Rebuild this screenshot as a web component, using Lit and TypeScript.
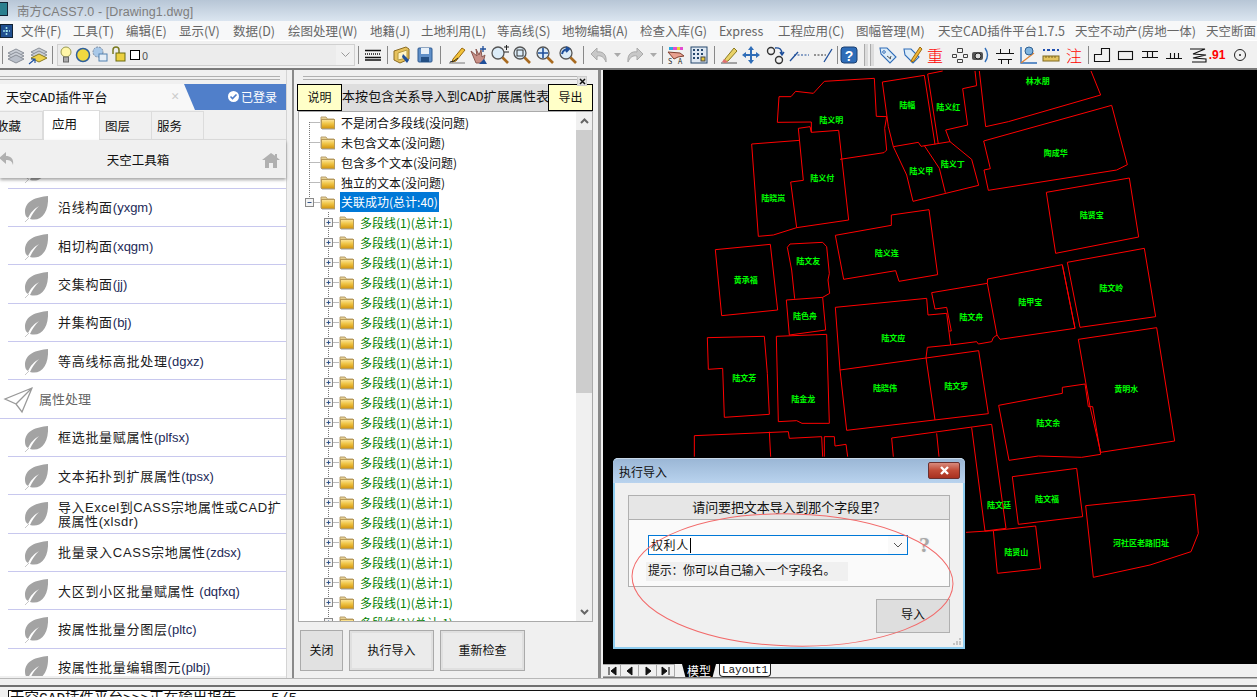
import { LitElement, html, css, svg } from "lit";
import { customElement } from "lit/decorators.js";

const MENUS: [string, number][] = [
  ["文件(F)", 52], ["工具(T)", 53], ["编辑(E)", 53], ["显示(V)", 54], ["数据(D)", 55], ["绘图处理(W)", 82], ["地籍(J)", 51],
  ["土地利用(L)", 76], ["等高线(S)", 65], ["地物编辑(A)", 78], ["检查入库(G)", 79], ["Express", 59], ["工程应用(C)", 78],
  ["图幅管理(M)", 82], ["天空CAD插件平台1.7.5", 137], ["天空不动产(房地一体)", 131], ["天空断面", 60],
];

const ic = (body: unknown) => html`<svg class="ic" width="20" height="20" viewBox="0 0 20 20">${body}</svg>`;
const zoomIc = (inner: unknown) => ic(svg`<circle cx="8" cy="8" r="6" fill="#dcecf8" stroke="#555" stroke-width="1.3"/><path d="M12.5 12.5L18 18" stroke="#a86a20" stroke-width="2.6"/>${inner}`);
const shapeStroke = "#111";

const ICONS: Record<string, unknown> = {
  layer1: ic(svg`<path d="M10 4l8 4-8 4-8-4z" fill="#c9ced6" stroke="#8a8f98"/><path d="M10 7l8 4-8 4-8-4z" fill="#c9ced6" stroke="#8a8f98"/><path d="M10 10l8 4-8 4-8-4z" fill="#b9bfc9" stroke="#8a8f98"/>`),
  layer2: ic(svg`<path d="M11 3l8 4-8 4-8-4z" fill="#c9ced6" stroke="#8a8f98"/><path d="M11 6l8 4-8 4-8-4z" fill="#c9ced6" stroke="#8a8f98"/><path d="M11 9l8 4-8 4-8-4z" fill="#eed24c" stroke="#8a7a20"/><path d="M1 19l6-5M3 14h4v4" stroke="#1c4fa0" stroke-width="1.1" fill="none"/>`),
  line: ic(svg`<path d="M2 5.500h16M2 9h1m1 0h1m1 0h1m1 0h1m1 0h1m1 0h1m1 0h1m1 0h1M2 12.500h16M2 15h16" stroke="#111" stroke-width="1.300"/>`),
  open: ic(svg`<path d="M2 6l12-4 3 2v10l-9 4-6-3z" fill="#e7c25c" stroke="#8a6a20"/><path d="M6 8l9-3v8l-9 2z" fill="#fff4c8" stroke="#b49a40"/><path d="M11 9l6 6-2 3-5-6z" fill="#1f4f9a"/>`),
  save: ic(svg`<rect x="3" y="3" width="14" height="14" rx="1" fill="#5f8fc8" stroke="#2e5a90"/><rect x="6" y="3" width="8" height="6" fill="#e8f0f8"/><rect x="6" y="12" width="8" height="5" fill="#234f84"/>`),
  pencil: ic(svg`<path d="M2 18h16" stroke="#777"/><path d="M6 14L15 3l3 2-9 11-4 1z" fill="#f2c238" stroke="#9a6a10"/><path d="M3 17q4 0 8-4" stroke="#222" fill="none"/>`),
  hand: ic(svg`<path d="M3 6l6 5-1-7 3 6 2-5 1 7 3-2-2 8H8z" fill="#c89088" stroke="#8a5850"/><path d="M15 1v6M12 4h6" stroke="#1f4f9a" stroke-width="1.300"/><path d="M11 19l5-5 3 5z" fill="#1f4f9a"/>`),
  zoomPlus: zoomIc(svg`<path d="M14 2h5M16.500 0v5M14 7h5" stroke="#222" stroke-width="1"/>`),
  zoomBox: zoomIc(svg`<rect x="5" y="5" width="6" height="6" fill="none" stroke="#333"/>`),
  zoomMove: zoomIc(svg`<path d="M8 3v10M3 8h10" stroke="#1f4f9a" stroke-width="1.600"/>`),
  zoomBack: zoomIc(svg`<path d="M4 9q1-5 7-5M8 2l3 2-3 3" stroke="#1f4f9a" stroke-width="2" fill="none"/>`),
  undo: ic(svg`<path d="M17 17C18 9 13 6 8 7V3L2 9l6 6v-4c4-1 7 1 9 6z" fill="#c8c8c8" stroke="#aaa"/>`),
  redo: ic(svg`<path d="M3 17C2 9 7 6 12 7V3l6 6-6 6v-4c-4-1-7 1-9 6z" fill="#c8c8c8" stroke="#aaa"/>`),
  drop: html`<svg width="7" height="4" viewBox="0 0 7 4"><path d="M0 0h7L3.500 4z" fill="#aaa"/></svg>`,
  color: ic(svg`<path d="M3 2h14v3H3z" fill="#e34ad0"/><path d="M3 2h4v3H3z" fill="#2aa8e0"/><path d="M11 2h3v3h-3z" fill="#e8d22c"/><path d="M2 7l12 1 4 3-6 1-4 2z" fill="#e8a090" stroke="#804030"/><text x="2" y="19" font-size="7" fill="#222">S</text><text x="12" y="19" font-size="7" fill="#222">A</text>`),
  grid: ic(svg`<rect x="2" y="2" width="16" height="16" fill="#dfe8f2" stroke="#26486e"/><path d="M4 5h2m2 0h2m2 0h2M4 9h2m2 0h2m2 0h2M4 13h2m2 0h2" stroke="#26486e" stroke-width="2"/><rect x="12" y="12" width="4" height="4" fill="#e8c838" stroke="#444"/>`),
  eraser: ic(svg`<path d="M2 18h16" stroke="#555"/><path d="M6 14L15 3l3 3-9 10-4 1z" fill="#e9d268" stroke="#8a7a20"/><path d="M5 14l4 3-3 1-3-1z" fill="#e07070"/>`),
  move: ic(svg`<path d="M10 1l3 4h-2v4h4V7l4 3-4 3v-2h-4v4h2l-3 4-3-4h2v-4H5v2l-4-3 4-3v2h4V5H7z" fill="#2f6db8"/>`),
  rings: ic(svg`<circle cx="6" cy="6" r="3.500" fill="none" stroke="#333" stroke-width="1.400"/><circle cx="14" cy="15" r="3.500" fill="none" stroke="#333" stroke-width="1.400"/><path d="M10 3q7-1 7 6M15 7l2 3 2-3" stroke="#1f4f9a" stroke-width="1.400" fill="none"/>`),
  trim: ic(svg`<path d="M1 16L9 7" stroke="#1f4f9a" stroke-width="1.300"/><path d="M5 10h15" stroke="#1f4f9a" stroke-dasharray="2 1.500"/>`),
  ext: ic(svg`<path d="M1 10h12" stroke="#333" stroke-dasharray="2 1.500"/><path d="M11 17L19 4" stroke="#1f4f9a" stroke-width="1.300"/>`),
  help: ic(svg`<rect x="2" y="2" width="16" height="16" rx="3" fill="#2f6db8" stroke="#1a3f70"/><text x="10" y="15.500" text-anchor="middle" font-size="14" font-weight="700" font-family="Liberation Sans" fill="#fff">?</text>`),
  tag: ic(svg`<path d="M2 3h7l9 9-6 6-9-9z" fill="#dcecf8" stroke="#2f6db8" stroke-width="1.100"/><circle cx="6" cy="7" r="1.300" fill="#fff" stroke="#2f6db8"/><path d="M9 11l4 3M13 11l-1 3" stroke="#555"/>`),
  tag2: ic(svg`<path d="M1 4h7l8 8-6 6-8-8z" fill="#dcecf8" stroke="#2f6db8" stroke-width="1.100"/><path d="M9 14L17 2l2 2-8 12-3 1z" fill="#f2b838" stroke="#9a6a10"/>`),
  squares: ic(svg`<path d="M7.500 3.500h5v4h-5zM2.500 9.500h4v3h-4zM13.500 9.500h4v3h-4zM7.500 14.500h5v3h-5z" fill="none" stroke="#444" stroke-width="1"/>`),
  camera: ic(svg`<rect x="2" y="7" width="11" height="8" rx="2" fill="#555"/><circle cx="8" cy="11" r="3" fill="#ddd" stroke="#222"/><path d="M15 3q5 7 0 14" stroke="#2f6db8" stroke-width="1.400" fill="none"/>`),
  symbol: ic(svg`<path d="M1 8.500h18M5.500 4v5M14.500 4v5M3 14.500h14M6.500 14v5M13.500 14v5" stroke="#111" stroke-width="1"/>`),
  measure: ic(svg`<path d="M3 2v16h16" stroke="#2f6db8" stroke-width="1.400" fill="none"/><path d="M3 18L16 8" stroke="#e08030" stroke-width="1.200"/><circle cx="11" cy="6" r="4" fill="#7fb4e0" stroke="#2f5f90"/>`),
  ruler: ic(svg`<path d="M2 5h2m2 0h3m2 0h3m2 0h2" stroke="#2050b0" stroke-width="2"/><rect x="2" y="11" width="16" height="5" fill="#e4c460" stroke="#806a20"/><path d="M5 11v2M8 11v2M11 11v2M14 11v2" stroke="#806a20"/>`),
  step: ic(svg`<path d="M2.500 16.500v-7h7v-6h8v13z" fill="none" stroke="${shapeStroke}" stroke-width="1.100"/>`),
  rect: ic(svg`<rect x="2.500" y="6.500" width="14" height="8" fill="none" stroke="${shapeStroke}" stroke-width="1.100"/>`),
  hh: ic(svg`<path d="M2 6.500h16M2 12.500h16M7.500 6.500v6M12.500 6.500v6" stroke="${shapeStroke}" stroke-width="1.100" fill="none"/>`),
  tt: ic(svg`<path d="M2 13.500h16M6.500 8v5M10.500 8v5M14.500 8v5" stroke="${shapeStroke}" stroke-width="1.100" fill="none"/>`),
  zig: ic(svg`<path d="M2 4h15l-12 5 13 1-13 3 13 1v3H4" stroke="${shapeStroke}" stroke-width="1.100" fill="none"/>`),
  target: ic(svg`<circle cx="10" cy="10" r="5.500" fill="none" stroke="#222" stroke-width="1"/><circle cx="10" cy="10" r="1" fill="#222"/>`),
};

type Tool = { w: number; k?: string; t?: string; c?: string };
const TOOLS: Tool[] = [
  { w: 5, c: "sep" }, { w: 21, k: "layer1" }, { w: 24, k: "layer2" }, { w: 4, c: "sep" }, { w: 3 }, { w: 298, c: "combo" },
  { w: 6, c: "sep" }, { w: 24, k: "line" }, { w: 4, c: "sep" }, { w: 26, k: "open" }, { w: 20, k: "save" }, { w: 10, c: "sep" },
  { w: 24, k: "pencil" }, { w: 18, k: "hand" }, { w: 26, k: "zoomPlus" }, { w: 18, k: "zoomBox" }, { w: 28, k: "zoomMove" }, { w: 18, k: "zoomBack" },
  { w: 12, c: "sep" }, { w: 20, k: "undo" }, { w: 16, k: "drop" }, { w: 20, k: "redo" }, { w: 16, k: "drop" }, { w: 2, c: "sep" },
  { w: 26, k: "color" }, { w: 20, k: "grid" }, { w: 10, c: "sep" }, { w: 20, k: "eraser" }, { w: 24, k: "move" }, { w: 24, k: "rings" },
  { w: 24, k: "trim" }, { w: 24, k: "ext" }, { w: 4, c: "sep" }, { w: 20, k: "help" }, { w: 19, c: "grip" }, { w: 20, k: "tag" }, { w: 30, k: "tag2" },
  { w: 14, t: "重", c: "red" }, { w: 8 }, { w: 20, k: "squares" }, { w: 20, k: "camera" }, { w: 30, k: "symbol" }, { w: 16, k: "measure" },
  { w: 30, k: "ruler" }, { w: 16, t: "注", c: "red" }, { w: 12, c: "sep" }, { w: 16, k: "step" }, { w: 32, k: "rect" }, { w: 16, k: "hh" },
  { w: 32, k: "tt" }, { w: 16, k: "zig" }, { w: 22, t: ".91", c: "red small" }, { w: 24, k: "target" },
];

const ROWS: { cn?: string; en?: string; raw?: string; group?: boolean }[] = [
  { cn: "", en: "" },
  { cn: "沿线构面", en: "(yxgm)" }, { cn: "相切构面", en: "(xqgm)" }, { cn: "交集构面", en: "(jj)" }, { cn: "并集构面", en: "(bj)" },
  { cn: "等高线标高批处理", en: "(dgxz)" }, { cn: "属性处理", group: true },
  { cn: "框选批量赋属性", en: "(plfsx)" }, { cn: "文本拓扑到扩展属性", en: "(tpsx)" },
  { raw: "导入Excel到CASS宗地属性或CAD扩展属性(xlsdr)" }, { cn: "批量录入CASS宗地属性", en: "(zdsx)" },
  { cn: "大区到小区批量赋属性 ", en: "(dqfxq)" }, { cn: "按属性批量分图层", en: "(pltc)" }, { cn: "按属性批量编辑图元", en: "(plbj)" },
];

const Z8 = 70, Z9 = 260;
const LINES: [number, number[]][] = [
  [Z8, [262,157,267,80,303,80,317,64,370,70,403,34,553,25,559,139,590,140,584,175,590,240,582,248,450,268]],
  [Z8, [262,157,364,156,364,187,446,181,476,450,320,473]],
  [Z8, [329,211,185,222,205,499,250,495,320,473,302,336,340,331,325,175,360,170,364,187]],
  [Z8, [577,36,703,16,735,223]],
  [Z8, [577,36,595,170,610,230,685,217,693,229,780,215,845,268,866,346,669,394,650,315,610,230]],
  [Z8, [703,227,748,295,766,368]],
  [Z8, [713,12,758,3]], [Z8, [713,12,745,222]],
  [Z8, [855,3,860,47,818,56,833,165,767,180,780,215]],
  [Z8, [868,3,887,170,955,155,1232,75,1203,3]],
  [Z8, [881,213,1265,106,1312,284,1280,300,895,361,882,300,901,296,881,213]],
  [Z8, [1069,367,1318,324,1346,501,1097,550,1069,367]],
  [Z8, [436,496,604,466,604,435,717,419,743,614,627,634,617,602,461,628,436,496]],
  [Z8, [76,539,241,523,263,720,95,737,76,539]],
  [Z8, [314,686,305,600,292,532,300,522,398,517,410,530,418,610,414,630,419,670,398,682]],
  [Z9, [289,120,398,112,407,210,298,225,289,120]],
  [Z9, [52,233,223,229,232,340,238,463,103,472,98,325,55,328,52,233]],
  [Z9, [259,229,410,223,418,490,336,490,320,482,265,485,259,229]],
  [Z9, [436,142,710,115,714,165,770,160,782,255]],
  [Z9, [436,142,450,330,470,511,895,461,866,272,450,330]],
  [Z9, [708,293,735,480]],
  [Z9, [782,255,712,262,708,293]],
  [Z9, [725,98,892,70,921,225,930,238,1155,205,1117,14,893,57,892,70]],
  [Z9, [725,98,735,147,770,142,784,213,778,213]],
  [Z9, [782,255,860,245,865,252,905,245,910,233,921,225]],
  [Z8, [1132,577,1363,535,1397,740,1170,772,1132,577]],
  [Z8, [1117,585,1155,775]],
  [Z9, [1165,238,1400,203,1454,543,1232,577,1200,440,1188,372,1165,238]],
  [Z9, [926,436,1117,400,1117,382,1185,372]],
  [Z9, [926,436,957,601,1045,588,1175,592,1232,583,1208,440,1195,440,1185,372]],
  [Z9, [13,590,13,527,295,515,298,535,395,530,398,590]],
  [Z9, [238,515,242,590]],
  [Z9, [403,590,403,530,433,530,435,558,468,553,473,590]],
  [Z9, [610,590,605,534,905,493,948,805,885,813,845,503]],
  [Z9, [740,520,747,590]],
  [Z9, [828,817,910,812,1037,798,1052,926,922,940,910,812]],
  [Z9, [967,650,1160,625,1178,770,985,793,967,650]],
  [Z9, [1187,737,1514,703,1525,820,1503,875,1380,915,1210,952,1187,737]],
];

const LABELS: [number, string, number, number][] = [
  [Z8,"陆义明",424,151],[Z8,"陆幅",652,106],[Z8,"陆义红",775,112],[Z8,"林水朋",1043,35],[Z8,"陆义付",397,325],[Z8,"陆义甲",694,306],
  [Z8,"陆义丁",788,284],[Z8,"陶成华",1097,250],[Z8,"陆晓岚",250,385],[Z8,"陆贤宝",1205,436],[Z8,"陆义连",590,550],[Z8,"黄承福",167,632],
  [Z8,"陆文友",355,575],[Z8,"陆色舟",345,739],[Z8,"陆文舟",844,742],[Z8,"陆甲宝",1021,699],[Z8,"陆文岭",1264,656],
  [Z9,"陆文应",610,235],[Z9,"陆文芳",163,355],[Z9,"陆金龙",340,418],[Z9,"陆晓伟",585,385],[Z9,"陆文罗",799,380],[Z9,"黄明水",1309,388],
  [Z9,"陆文余",1075,490],[Z9,"陆文福",1071,718],[Z9,"陆文廷",927,738],[Z9,"陆贤山",979,877],[Z9,"河社区老路旧址",1353,852],
];

const toPts = (oy: number, a: number[]) => {
  const out: string[] = [];
  for (let i = 0; i < a.length; i += 2) out.push(`${a[i] / 3 + 690},${a[i + 1] / 3 + oy}`);
  return out.join(" ");
};

const leaf = html`<svg class="leaf" width="27" height="28" viewBox="0 0 27 28"><path d="M25 1C13 2 2 6 2 17c0 3 1 5 3 6 3-6 6-9 11-12-4 4-7 8-9 13 11 3 19-6 18-23z" fill="#a3a3a3"/><path d="M2 27l4-4" stroke="#c8c8c8"/></svg>`;
const plane = html`<svg class="plane" width="30" height="28" viewBox="0 0 30 28"><path d="M29 2L2 13l11 5 6 8zM29 2L13 18" fill="none" stroke="#999" stroke-width="1.300"/></svg>`;
const folder = html`<svg class="folder" width="16" height="15" viewBox="0 0 16 15"><defs><linearGradient id="fg" x1="0" y1="0" x2="0" y2="1"><stop offset="0" stop-color="#fbe6a0"/><stop offset=".45" stop-color="#f0c648"/><stop offset="1" stop-color="#d2940e"/></linearGradient></defs><path d="M1 2h5l1.500 2H14v9H1z" fill="#e6cf90" stroke="#b8a070"/><rect x="1.500" y="4.500" width="13" height="9" fill="url(#fg)" stroke="#b69a5a"/><path d="M2 14.500h13" stroke="#ccc"/></svg>`;
const rootConn = (first: boolean, open: boolean) => html`<svg class="conn" width="21" height="20" viewBox="0 0 21 20"><path d="M10.500 ${first ? 10 : 0}V${open ? 6 : 20}M10.500 10.500H21" stroke="#777" stroke-dasharray="1 1" fill="none"/>${open ? svg`<rect x="6.500" y="6.500" width="8" height="8" fill="#f4f4f4" stroke="#8a8a8a"/><path d="M8.500 10.500h4" stroke="#33558a"/>` : ""}</svg>`;
const kidConn = html`<svg class="conn" width="40" height="20" viewBox="0 0 40 20"><path d="M29.500 0V20M29.500 10.500H40" stroke="#777" stroke-dasharray="1 1" fill="none"/><rect x="25.500" y="6.500" width="8" height="8" fill="#f4f4f4" stroke="#8a8a8a"/><path d="M27.500 10.500h4M29.500 8.500v4" stroke="#33558a"/></svg>`;
const ROOTS = ["不是闭合多段线(没问题)", "未包含文本(没问题)", "包含多个文本(没问题)", "独立的文本(没问题)"];

@customElement("app-root")
export class AppRoot extends LitElement {
  static styles = css`
    :host { display: block; width: 1257px; height: 697px; overflow: hidden; font-family: "Noto Sans CJK SC", "Liberation Sans", sans-serif; font-size: 12px; color: #111; background: #f0f0f0; }
    * { box-sizing: border-box; }
    .app { width: 1257px; height: 697px; display: flex; flex-direction: column; overflow: hidden; }
    .title { height: 21px; flex: none; display: flex; align-items: center; padding-left: 17px; color: #7e7e7e; font: 12.500px "Liberation Sans", "Noto Sans CJK SC", sans-serif; background: linear-gradient(#b7c6d6, #dbe5f0); position: relative; letter-spacing: .1px; }
    .logo { position: absolute; left: -4px; top: 2px; width: 12px; height: 14px; background: #2a7f8f; border: 1px solid #123; }
    .menu { height: 19px; flex: none; display: grid; grid-template-columns: 21px repeat(17, auto) 1fr; justify-content: start; align-items: center; background: #f7f8f9; color: #666; white-space: nowrap; font-size: 12.500px; overflow: hidden; }
    .menu svg { display: block; }
    .toolbar { height: 28px; flex: none; display: flex; align-items: center; background: #f1f1f1; border-top: 1px solid #fff; overflow: hidden; }
    .tool { flex: none; height: 26px; display: flex; align-items: center; justify-content: center; overflow: visible; }
    .tool .ic { flex: none; }
    .sep::after { content: ""; display: block; width: 1px; height: 18px; background: #888; }
    .grip { gap: 2px; }
    .grip::before, .grip::after { content: ""; width: 3px; height: 22px; background: #dcdcdc; border-left: 1px solid #aaa; }
    .red { color: #f00; font-size: 16px; font-family: "Noto Sans CJK SC", sans-serif; font-weight: 300; white-space: nowrap; }
    .small { font: bold 12px "Liberation Sans", sans-serif; }
    .combo { height: 22px; border: 1px solid #d0d0d0; background: #ececec; justify-content: flex-start; gap: 1px; padding-left: 2px; position: relative; }
    .combo .bulb { margin-left: -2px; }
    .combo .ln { margin-left: 1px; color: #555; font-size: 11px; }
    .swatch { width: 10px; height: 10px; border: 1px solid #000; background: #fff; margin-left: 2px; }
    .combo .chev { margin-left: auto; width: 18px; height: 20px; background: #f1f1f1; display: flex; align-items: center; justify-content: center; }
    .rule { height: 2px; flex: none; background: #7a7a7a; }
    .main { height: 608px; flex: none; display: flex; }
    .left { width: 287px; flex: none; display: flex; flex-direction: column; border-right: 1px solid #d4d4d4; }
    .divider { flex: none; width: 11px; padding-left: 5px; }
    .divider i { display: block; width: 2px; height: 100%; background: #8a8a8a; }
    .divider.b { width: 10px; padding-left: 5px; }
    .divider.b i { width: 3px; }
    .griprow { height: 14px; flex: none; padding-top: 6px; }
    .griprow div { height: 4px; margin-right: 6px; border-top: 1px solid #b0b0b0; border-bottom: 1px solid #b0b0b0; }
    .tabhead { height: 26px; flex: none; display: flex; background: #507fca; position: relative; color: #fff; }
    .tabhead .cur { width: 195px; flex: none; background: #f8f8f8; color: #111; padding: 0 0 2px 6px; display: flex; align-items: center; justify-content: space-between; clip-path: polygon(0 0, 184px 0, 195px 100%, 0 100%); font-size: 13px; font-family: "Liberation Mono", "Noto Sans CJK SC", monospace; }
    .tabhead .x { color: #ccc; margin-right: 16px; font-size: 13px; font-weight: 700; }
    .login { margin-left: auto; padding: 0 9px 2px 0; display: flex; align-items: center; gap: 2px; font-size: 12px; }
    .tabs { height: 30px; flex: none; display: flex; background: #f0f0f0; border-bottom: 1px solid #ddd; padding-top: 1px; }
    .tabs div { width: 52px; border: 1px solid #dcdcdc; border-bottom: none; border-left: none; display: flex; align-items: center; padding-left: 5px; font-size: 12.500px; }
    .tabs .clip { width: 43px; justify-content: flex-end; padding: 0 21px 0 0; white-space: nowrap; }
    .tabs .on { width: 57px; background: #fff; border-left: 1px solid #dcdcdc; height: 30px; margin-top: -1px; padding: 0 0 5px 8px; }
    .box { height: 38px; flex: none; display: flex; align-items: center; justify-content: center; background: #f0f0f0; position: relative; font-size: 12.500px; box-shadow: 0 2px 3px rgba(0,0,0,.35); z-index: 1; padding-right: 10px; }
    .box svg { position: absolute; }
    .box .back { left: -2px; top: 11px; }
    .box .home { right: 6px; top: 12px; }
    .list { height: 498px; flex: none; overflow: hidden; background: #fff; }
    .rows { margin-top: -27.700px; }
    .row { height: 38.330px; display: flex; align-items: center; gap: 8px; margin-left: 8px; padding: 2px 0 0 15px; border-bottom: 1.500px solid #c8c8ee; font: 13px/14px "Liberation Sans", "Noto Sans CJK SC", sans-serif; color: #1c1c1c; }
    .row .leaf { flex: none; margin-top: 1px; }
    .row .cn { letter-spacing: .7px; }
    .row .en { color: #1c2a58; }
    .row.group { margin-left: 0; padding-left: 3px; color: #666; gap: 6px; }
    .row .wrap { width: 226px; letter-spacing: .55px; }
    .mid { width: 295px; flex: none; display: flex; flex-direction: column; }
    .mid .griprow { padding-left: 5px; padding-right: 11px; position: relative; }
    .mid .griprow div { margin: 0; }
    .closebox { position: absolute; right: 6px; top: 6px; width: 10px; height: 10px; background: #e0e0e0; border: 1px solid #ccc; display: flex; align-items: center; justify-content: center; }
    .hdr { height: 28px; flex: none; display: flex; background: #dedede; border-bottom: 1px solid #aaa; align-items: stretch; }
    .note { width: 45px; flex: none; background: #ffffc8; border: 1px solid #000; display: flex; align-items: center; justify-content: center; font-size: 12px; margin-left: -1px; padding-bottom: 2px; }
    .note.r { margin-left: 0; width: 45px; }
    .hdr .tt { flex: 1; white-space: nowrap; overflow: hidden; font: 13px/27px "Liberation Mono", "Noto Sans CJK SC", monospace; letter-spacing: .1px; }
    .tree { height: 510px; flex: none; display: flex; background: #fff; border: 1px solid #aaa; border-top: none; }
    .treebody { flex: 1; overflow: hidden; }
    .tr { height: 20px; display: flex; align-items: center; white-space: nowrap; }
    .conn, .folder { flex: none; }
    .tr .lbl { margin-left: 5px; }
    .tr.sel .lbl { background: #0078d7; color: #fff; margin-left: 4px; padding: 0 1px; height: 20px; line-height: 19px; }
    .tr.kid .lbl { color: #008000; margin-left: 5px; }
    .scroll { width: 16px; flex: none; display: flex; flex-direction: column; background: #f0f0f0; }
    .scroll .ar { height: 18px; display: flex; align-items: center; justify-content: center; }
    .scroll .thumb { height: 263px; background: #cdcdcd; }
    .scroll .track { flex: 1; }
    .btns { height: 56px; flex: none; display: flex; padding: 8px 0 7px 2px; gap: 6px; }
    .btn { border: 1px solid #aaa; background: #ebebeb; display: flex; align-items: center; justify-content: center; box-shadow: inset 0 0 0 2px #e0e0e0; font-size: 12px; padding-bottom: 2px; }
    .btn.a { width: 43px; background: #e1e1e1; box-shadow: none; }
    .btn.b { width: 85px; }
    .cadwrap { flex: 1; display: flex; flex-direction: column; }
    .canvas { height: 594px; flex: none; background: #000; position: relative; overflow: hidden; }
    .canvas svg.cad, .canvas svg.ring { position: absolute; left: 0; top: 0; }
    .canvas svg.ring { z-index: 3; pointer-events: none; }
    .cad text { font: bold 8px "Noto Sans CJK SC", sans-serif; fill: #00ff00; text-anchor: middle; dominant-baseline: middle; }
    .layouts { height: 14px; flex: none; display: flex; align-items: stretch; background: #f0f0f0; border-bottom: 1px solid #777; }
    .nav { width: 18px; border: 1px solid #aaa; border-left: none; display: flex; align-items: center; justify-content: center; }
    .ltab { margin-left: 7px; width: 34px; background: #000; color: #fff; font-size: 12px; line-height: 13px; text-align: center; clip-path: polygon(0 0, 100% 0, 90% 100%, 10% 100%); }
    .ltab.l { margin-left: 3px; width: 52px; background: #fff; color: #111; font: 11px/13px "Liberation Mono", monospace; clip-path: none; border: 1px solid #222; border-top: none; border-radius: 0 0 4px 4px; }
    .dialog { position: absolute; left: 10px; top: 388px; width: 352px; height: 191px; z-index: 2; display: flex; flex-direction: column; background: #f0f0f0; border: 2px solid #8fcdf0; border-top: none; border-radius: 5px 5px 0 0; }
    .dlgtitle { height: 25px; flex: none; margin: 0 -2px; padding: 0 5px 0 6px; display: flex; align-items: center; justify-content: space-between; background: linear-gradient(#9bb7d6, #b9d3ee); border-radius: 5px 5px 0 0; border-top: 1px solid #c8d8e8; font-size: 12px; }
    .dlgclose { width: 32px; height: 17px; margin-top: -1px; border: 1px solid #6a3030; border-radius: 2px; background: linear-gradient(#d88a7c, #c04a36 50%, #a83020); display: flex; align-items: center; justify-content: center; }
    .dlgbody { flex: 1; padding: 12px 13px; display: flex; flex-direction: column; position: relative; }
    .frame { height: 92px; flex: none; border: 1px solid #b0b0b0; background: #fafafa; display: flex; flex-direction: column; }
    .frame .q { height: 24px; flex: none; background: #e6e6e6; border-bottom: 1px solid #b0b0b0; display: flex; align-items: center; justify-content: center; font-size: 13px; letter-spacing: -.1px; padding-bottom: 2px; }
    .fields { display: flex; padding: 15px 0 0 19px; gap: 11px; align-items: center; }
    .input { width: 260px; height: 20px; border: 1px solid #0078d7; background: #fff; display: flex; align-items: center; padding-left: 2px; font-size: 12px; }
    .input .val { border-right: 1px solid #000; height: 15px; line-height: 14px; padding-right: 1px; letter-spacing: .6px; }
    .input .ch { margin-left: auto; width: 19px; height: 18px; background: #fafafa; display: flex; align-items: center; justify-content: center; }
    .qmark { color: #a8a8a8; font: bold 22px "Liberation Serif", serif; text-shadow: 0 0 2px #ddd; line-height: 20px; }
    .hint { margin: 7px 0 0 17px; width: 202px; height: 19px; background: #f0f0f0; padding-left: 2px; line-height: 15px; font-size: 12px; letter-spacing: -.3px; }
    .hbtn { align-self: flex-end; margin-top: 12px; width: 74px; height: 34px; background: #dedede; border: 1px solid #b0b0b0; display: flex; align-items: center; justify-content: center; font-size: 12px; padding-bottom: 5px; }
    .resz { position: absolute; right: 2px; bottom: 2px; }
    .bottom { flex: 1; min-height: 0; overflow: hidden; }
    .b1 { height: 7px; background: #f0f0f0; border-top: 1px solid #b8b8b8; }
    .b2 { height: 2px; background: #707070; }
    .b3 { height: 3px; background: #f0f0f0; }
    .b4 { height: 20px; margin-left: 8px; background: #fff; border: 1px solid #111; padding-left: 1px; font: 14.500px/16px "Liberation Mono", "Noto Sans CJK SC", monospace; white-space: pre; overflow: hidden; }
  `;

  renderTool(t: Tool) {
    const cls = `tool ${t.c ?? ""}`;
    if (t.c === "combo")
      return html`<div class=${cls} style="width:${t.w}px">
        <svg class="bulb" width="16" height="20" viewBox="0 0 16 20"><circle cx="8" cy="7" r="5" fill="#fff6a8" stroke="#9a9a50"/><rect x="5.500" y="12" width="5" height="5" fill="#aaa" stroke="#666"/></svg>
        <svg width="16" height="16" viewBox="0 0 16 16"><circle cx="8" cy="8" r="6.500" fill="#f0d840" stroke="#2e5f9a" stroke-width="1.500"/></svg>
        <svg width="17" height="17" viewBox="0 0 17 17"><circle cx="6" cy="6" r="5" fill="#a8c8e8" stroke="#7a8aa0" stroke-dasharray="2 1"/><rect x="7" y="8" width="8" height="7" fill="#e6eef6" stroke="#5080b0"/></svg>
        <svg width="17" height="17" viewBox="0 0 17 17"><path d="M3 8V4a3 3 0 016 0v4" fill="none" stroke="#7a7a20" stroke-width="1.500"/><rect x="6" y="7" width="9" height="8" fill="#ecd040" stroke="#6a6a10"/></svg>
        <span class="swatch"></span><span class="ln">0</span>
        <span class="chev"><svg width="9" height="5" viewBox="0 0 9 5"><path d="M.5.500l4 4 4-4" fill="none" stroke="#999"/></svg></span>
      </div>`;
    return html`<div class=${cls} style="width:${t.w}px">${t.k ? ICONS[t.k] : t.t ?? ""}</div>`;
  }

  render() {
    const navIcons = ["M4 2v8M11 2L6 6l5 4z", "M9 2L4 6l5 4z", "M5 2l5 4-5 4z", "M3 2l5 4-5 4zM10 2v8"];
    return html`<div class="app">
      <div class="title"><span class="logo"></span>南方CASS7.0 - [Drawing1.dwg]</div>
      <div class="menu">
        <svg width="13" height="14" viewBox="0 0 13 14"><rect x=".5" y=".5" width="12" height="13" fill="#1f4f90" stroke="#123"/><path d="M6.500 3v8M3 7h7" stroke="#9fe0e8" stroke-width="1.600" stroke-dasharray="2 1"/></svg>
        ${MENUS.map(([m, w]) => html`<span style="width:${w}px">${m}</span>`)}
      </div>
      <div class="toolbar">${TOOLS.map((t) => this.renderTool(t))}</div>
      <div class="rule"></div>
      <div class="main">
        <div class="left">
          <div class="griprow"><div></div></div>
          <div class="tabhead">
            <div class="cur">天空CAD插件平台<span class="x">✕</span></div>
            <div class="login">
              <svg width="11" height="11" viewBox="0 0 11 11"><circle cx="5.500" cy="5.500" r="5.500" fill="#fff"/><path d="M2.500 5.500l2 2 4-4" stroke="#507fca" stroke-width="1.600" fill="none"/></svg>
              已登录
            </div>
          </div>
          <div class="tabs"><div class="clip">收藏</div><div class="on">应用</div><div>图层</div><div>服务</div></div>
          <div class="box">
            <svg class="back" width="17" height="16" viewBox="0 0 17 16"><path d="M8 1L1 7l7 6V9c4 0 6 1 7 5 1-6-2-9-7-9z" fill="#b0b0b0"/></svg>
            天空工具箱
            <svg class="home" width="18" height="16" viewBox="0 0 18 16"><path d="M9 1L0 8h3v8h4v-5h4v5h4V8h3l-3-2.500V2h-2v1.800z" fill="#b0b0b0"/></svg>
          </div>
          <div class="list"><div class="rows">
            ${ROWS.map((r) =>
              r.group
                ? html`<div class="row group">${plane}<span>${r.cn}</span></div>`
                : html`<div class="row">${leaf}${r.raw ? html`<span class="wrap">${r.raw}</span>` : html`<span><span class="cn">${r.cn}</span><span class="en">${r.en}</span></span>`}</div>`
            )}
          </div></div>
        </div>
        <div class="divider"><i></i></div>
        <div class="mid">
          <div class="griprow"><div></div><span class="closebox"><svg width="7" height="7" viewBox="0 0 7 7"><path d="M1 1l5 5M6 1L1 6" stroke="#111" stroke-width="1.500"/></svg></span></div>
          <div class="hdr"><div class="note">说明</div><div class="tt">本按包含关系导入到CAD扩展属性表</div><div class="note r">导出</div></div>
          <div class="tree">
            <div class="treebody">
              ${ROOTS.map((r, i) => html`<div class="tr">${rootConn(i === 0, false)}${folder}<span class="lbl">${r}</span></div>`)}
              <div class="tr sel">${rootConn(false, true)}${folder}<span class="lbl">关联成功(总计:40)</span></div>
              ${Array.from({ length: 21 }, () => html`<div class="tr kid">${kidConn}${folder}<span class="lbl">多段线(1)(总计:1)</span></div>`)}
            </div>
            <div class="scroll">
              <div class="ar"><svg width="9" height="6" viewBox="0 0 9 6"><path d="M1 5l3.500-3.500L8 5" fill="none" stroke="#666" stroke-width="2"/></svg></div>
              <div class="thumb"></div><div class="track"></div>
              <div class="ar"><svg width="9" height="6" viewBox="0 0 9 6"><path d="M1 1l3.500 3.500L8 1" fill="none" stroke="#666" stroke-width="2"/></svg></div>
            </div>
          </div>
          <div class="btns"><div class="btn a">关闭</div><div class="btn b">执行导入</div><div class="btn b">重新检查</div></div>
        </div>
        <div class="divider b"><i></i></div>
        <div class="cadwrap">
          <div class="canvas">
            <svg class="cad" width="654" height="594" viewBox="603 70 654 594">
              ${LINES.map(([oy, a]) => svg`<polyline points=${toPts(oy, a)} fill="none" stroke="#ff0000" stroke-width="1"/>`)}
              ${LABELS.map(([oy, t, x, y]) => svg`<text x=${x / 3 + 690} y=${y / 3 + oy}>${t}</text>`)}
            </svg>
            <div class="dialog">
              <div class="dlgtitle">执行导入
                <span class="dlgclose"><svg width="13" height="9" viewBox="0 0 13 9"><path d="M3 1l7 7M10 1L3 8" stroke="#fff" stroke-width="2.400"/></svg></span>
              </div>
              <div class="dlgbody">
                <div class="frame">
                  <div class="q">请问要把文本导入到那个字段里？</div>
                  <div class="fields">
                    <div class="input"><span class="val">权利人</span><span class="ch"><svg width="10" height="6" viewBox="0 0 10 6"><path d="M1 1l4 4 4-4" fill="none" stroke="#555"/></svg></span></div>
                    <span class="qmark">?</span>
                  </div>
                  <div class="hint">提示：你可以自己输入一个字段名。</div>
                </div>
                <div class="hbtn">导入</div>
                <svg class="resz" width="8" height="7" viewBox="0 0 8 7"><path d="M6 0h2v2H6zM3 3h2v2H3zM6 3h2v2H6zM0 5h2v2H0zM3 5h2v2H3zM6 5h2v2H6z" fill="#c4c4c4"/></svg>
              </div>
            </div>
            <svg class="ring" width="654" height="594" viewBox="603 70 654 594">
              <ellipse cx="792.500" cy="580" rx="160.500" ry="66" fill="none" stroke="#f26a6a" stroke-width="1" transform="rotate(1.500 792.500 580)"/>
            </svg>
          </div>
          <div class="layouts">
            ${navIcons.map((d) => html`<span class="nav"><svg width="14" height="12" viewBox="0 0 14 12"><path d=${d} fill="#111" stroke="#111"/></svg></span>`)}
            <div class="ltab">模型</div><div class="ltab l">Layout1</div>
          </div>
        </div>
      </div>
      <div class="bottom">
        <div class="b1"></div><div class="b2"></div><div class="b3"></div>
        <div class="b4">天空CAD插件平台>>>正在输出报告    5/5</div>
      </div>
    </div>`;
  }
}
